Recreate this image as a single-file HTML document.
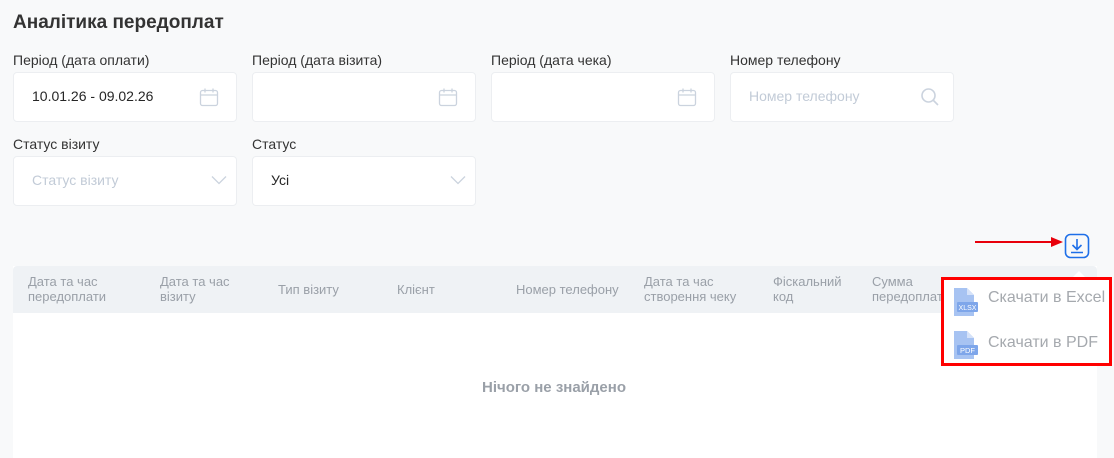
<!DOCTYPE html>
<html><head><meta charset="utf-8"><style>
*{box-sizing:border-box;margin:0;padding:0}
body{width:1114px;height:458px;overflow:hidden;background:#f8f9fa;font-family:"Liberation Sans",sans-serif;position:relative;color:#262626}
.abs{position:absolute}
h1{position:absolute;left:13px;top:12px;font-size:19px;font-weight:bold;color:#333}
.lbl{position:absolute;font-size:14px;color:#333}
.inp{position:absolute;width:224px;height:50px;background:#fff;border:1px solid #eceef1;border-radius:4px;font-size:14px}
.inp span{position:absolute;left:18px;top:15px}
.ph{color:#c2cbd7}
.th{position:absolute;top:8px;font-size:13px;color:#9aa0a8;line-height:15px}
.menu{position:absolute;left:941px;top:277px;width:171px;height:89px;background:#fff;border:3px solid #ff0000}
.mi{position:absolute;left:44px;font-size:16px;color:#a5a9ae}
</style></head><body>
<h1>Аналітика передоплат</h1>
<div class="lbl" style="left:13px;top:52px">Період (дата оплати)</div>
<div class="lbl" style="left:252px;top:52px">Період (дата візита)</div>
<div class="lbl" style="left:491px;top:52px">Період (дата чека)</div>
<div class="lbl" style="left:730px;top:52px">Номер телефону</div>
<div class="inp" style="left:13px;top:72px"><span>10.01.26 - 09.02.26</span></div>
<div class="inp" style="left:252px;top:72px"></div>
<div class="inp" style="left:491px;top:72px"></div>
<div class="inp" style="left:730px;top:72px"><span class="ph">Номер телефону</span></div>
<svg class="abs" style="left:199px;top:87px" width="20" height="20" viewBox="0 0 20 20" fill="none" stroke="#cbd3de" stroke-width="1.3"><rect x="1.5" y="3.5" width="17" height="15" rx="2"/><path d="M1.5 8h17M6 1.5v4M14 1.5v4"/></svg>
<svg class="abs" style="left:438px;top:87px" width="20" height="20" viewBox="0 0 20 20" fill="none" stroke="#cbd3de" stroke-width="1.3"><rect x="1.5" y="3.5" width="17" height="15" rx="2"/><path d="M1.5 8h17M6 1.5v4M14 1.5v4"/></svg>
<svg class="abs" style="left:677px;top:87px" width="20" height="20" viewBox="0 0 20 20" fill="none" stroke="#cbd3de" stroke-width="1.3"><rect x="1.5" y="3.5" width="17" height="15" rx="2"/><path d="M1.5 8h17M6 1.5v4M14 1.5v4"/></svg>
<svg class="abs" style="left:920px;top:87px" width="20" height="20" viewBox="0 0 20 20" fill="none" stroke="#cbd3de" stroke-width="1.6"><circle cx="8.5" cy="8.5" r="6.5"/><path d="M13.5 13.5l4.5 4.5"/></svg>
<div class="lbl" style="left:13px;top:136px">Статус візиту</div>
<div class="lbl" style="left:252px;top:136px">Статус</div>
<div class="inp" style="left:13px;top:156px"><span class="ph">Статус візиту</span></div>
<div class="inp" style="left:252px;top:156px"><span>Усі</span></div>
<svg class="abs" style="left:211px;top:175px" width="16" height="10" viewBox="0 0 16 10" fill="none" stroke="#cbd3de" stroke-width="1.3"><path d="M1 1.5l7 7 7-7"/></svg>
<svg class="abs" style="left:450px;top:175px" width="16" height="10" viewBox="0 0 16 10" fill="none" stroke="#cbd3de" stroke-width="1.3"><path d="M1 1.5l7 7 7-7"/></svg>
<svg class="abs" style="left:975px;top:236px" width="90" height="12" viewBox="0 0 90 12"><path d="M0 6h78" stroke="#e8000b" stroke-width="2"/><path d="M76 1l12 5-12 5z" fill="#e8000b"/></svg>
<svg class="abs" style="left:1064px;top:233px" width="26" height="26" viewBox="0 0 26 26" fill="none" stroke="#1e6fe8" stroke-width="1.6"><rect x="1.5" y="1.5" width="23" height="23" rx="5"/><path d="M13 6v10M8.5 12l4.5 4.5 4.5-4.5M7 19.5h12"/></svg>
<div class="abs" style="left:13px;top:266px;width:1084px;height:192px;background:#fff"></div>
<div class="abs" style="left:13px;top:266px;width:1084px;height:47px;background:#eff2f5;border-radius:4px 4px 0 0">
<div class="th" style="left:15px">Дата та час<br>передоплати</div>
<div class="th" style="left:147px">Дата та час<br>візиту</div>
<div class="th" style="left:265px;top:16px">Тип візиту</div>
<div class="th" style="left:384px;top:16px">Клієнт</div>
<div class="th" style="left:503px;top:16px">Номер телефону</div>
<div class="th" style="left:631px">Дата та час<br>створення чеку</div>
<div class="th" style="left:760px">Фіскальний<br>код</div>
<div class="th" style="left:859px">Сумма<br>передоплати</div>
</div>
<div class="abs" style="left:482px;top:379px;font-size:15px;font-weight:bold;color:#9aa0a8">Нічого не знайдено</div>
<svg class="abs" style="left:1072px;top:270px" width="14" height="8"><path d="M0 8l7-7 7 7z" fill="#fff"/></svg>
<div class="menu">
<svg class="abs" style="left:8px;top:8px" width="26" height="28" viewBox="0 0 26 28"><path d="M2 0h13l7 7v21H2z" fill="#a7c3f2"/><path d="M15 0v7h7z" fill="#d5e2f9"/><rect x="5" y="14" width="21" height="10" rx="1" fill="#7ea6ea"/><text x="15.5" y="22" font-size="7" fill="#fff" text-anchor="middle" font-family="Liberation Sans">XLSX</text></svg>
<div class="mi" style="top:9px">Скачати в Excel</div>
<svg class="abs" style="left:8px;top:51px" width="26" height="28" viewBox="0 0 26 28"><path d="M2 0h13l7 7v21H2z" fill="#a7c3f2"/><path d="M15 0v7h7z" fill="#d5e2f9"/><rect x="5" y="14" width="21" height="10" rx="1" fill="#7ea6ea"/><text x="15.5" y="22" font-size="7.5" fill="#fff" text-anchor="middle" font-family="Liberation Sans">PDF</text></svg>
<div class="mi" style="top:54px">Скачати в PDF</div>
</div>
</body></html>
